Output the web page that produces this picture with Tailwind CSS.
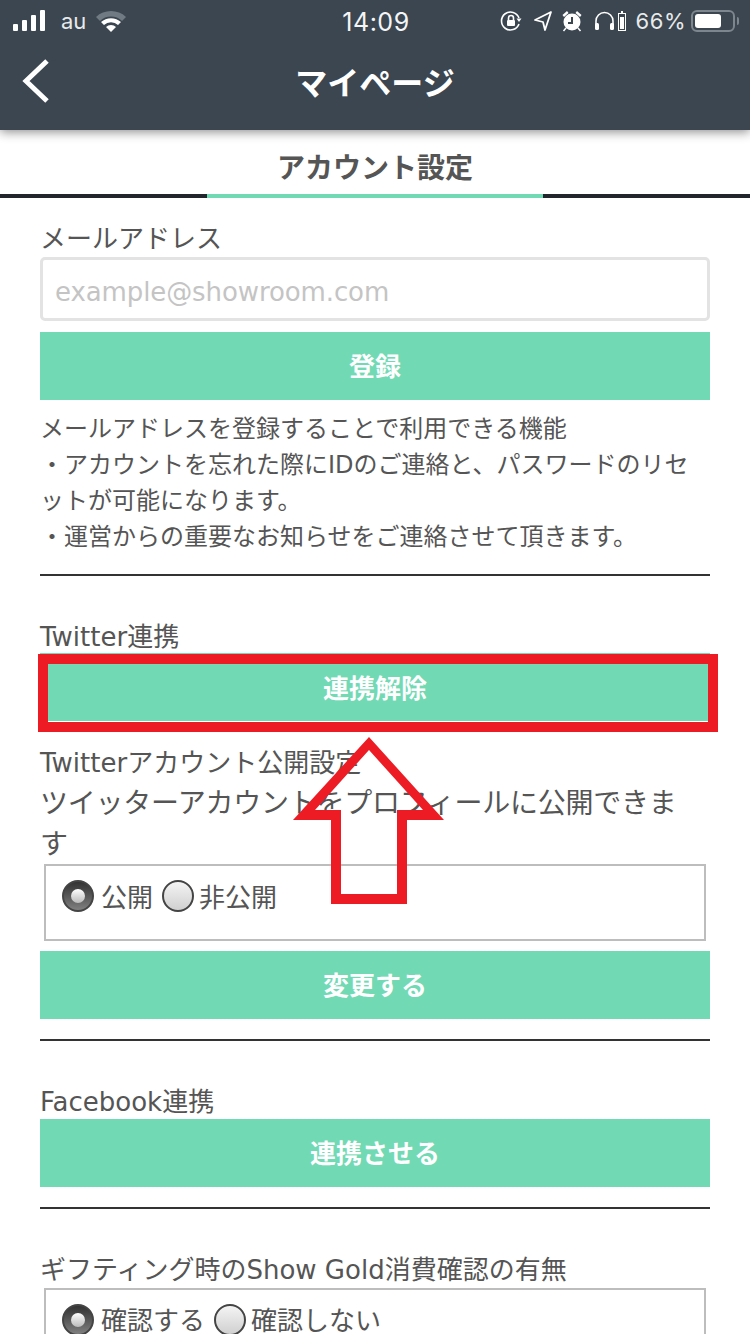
<!DOCTYPE html>
<html lang="ja">
<head>
<meta charset="utf-8">
<script src="https://cdn.jsdelivr.net/npm/@tailwindcss/browser@4"></script>
</head>
<body class="m-0 bg-white">
<div class="relative w-[750px] h-[1334px] overflow-hidden bg-white text-[#555555] font-['DejaVu_Sans','Noto_Sans_CJK_JP',sans-serif]">
  <header class="relative z-10 h-[130px] bg-[#3b4650] text-white shadow-[0_2px_10px_rgba(0,0,0,0.45)]">
    <div class="grid grid-cols-[1fr_auto_1fr] items-center h-[42px] pl-[13px] pr-[11px]">
      <div class="flex items-center">
        <svg width="34" height="22" viewBox="0 0 34 22" fill="#fff"><rect x="0" y="14" width="5" height="7" rx="1"/><rect x="9" y="10" width="5" height="11" rx="1"/><rect x="18" y="5" width="5" height="16" rx="1"/><rect x="27" y="0" width="5" height="21" rx="1"/></svg>
        <span class="ml-[14px] text-[22px] leading-[22px] font-['Inter',sans-serif] text-[#e8eaeb]">au</span>
        <svg class="ml-[9px]" width="32" height="24" viewBox="0 0 32 24"><path d="M1 8 A22 22 0 0 1 31 8 L27 12 A16 16 0 0 0 5 12 Z" fill="#6f7a83"/><path d="M6 13 A15 15 0 0 1 26 13 L23 16 A10 10 0 0 0 9 16 Z" fill="#fff"/><path d="M11 18 A7 7 0 0 1 21 18 L16 23 Z" fill="#fff"/></svg>
      </div>
      <span class="pt-[2px] text-[25px] leading-[24px] font-['Inter',sans-serif] tracking-[0.5px] text-[#f4f5f6]">14:09</span>
      <div class="flex items-center justify-end">
        <svg width="22" height="22" viewBox="0 0 22 22" fill="none" stroke="#fff" stroke-width="1.6"><path d="M19 14 A9 9 0 1 1 19 8"/><path d="M16.5 8.5 L21.5 8.5 L19 12 Z" fill="#fff" stroke="none"/><rect x="7" y="10" width="8" height="6" rx="1" fill="#fff" stroke="none"/><path d="M8.5 10 V8 a2.5 2.5 0 0 1 5 0 V10"/></svg>
        <svg class="ml-[11px]" width="20" height="22" viewBox="0 0 20 22" fill="none" stroke="#fff" stroke-width="1.8"><path d="M18 2 L2 10 L10 12 L12 20 Z" stroke-linejoin="round"/></svg>
        <svg class="ml-[9px]" width="20" height="22" viewBox="0 0 20 22" fill="#fff"><circle cx="10" cy="12" r="8.5"/><path d="M0.5 5 L5 1 L6.5 3 L2 7 Z M19.5 5 L15 1 L13.5 3 L18 7 Z"/><path d="M1.5 21 L4 18 M18.500 21 L16 18" stroke="#fff" stroke-width="1.5"/><path d="M10 7 V13 H6" stroke="#3b4650" stroke-width="2" fill="none"/></svg>
        <svg class="ml-[12px]" width="21" height="22" viewBox="0 0 21 22" fill="none" stroke="#fff" stroke-width="1.6"><path d="M2 17 V11 a8.500 8.500 0 0 1 17 0 V17"/><rect x="1" y="13" width="4" height="7" rx="1.500" fill="#fff" stroke="none"/><rect x="16" y="13" width="4" height="7" rx="1.500" fill="#fff" stroke="none"/></svg>
        <svg class="ml-[3px]" width="9" height="22" viewBox="0 0 9 22"><rect x="0.5" y="3.5" width="7" height="17" fill="none" stroke="#fff"/><rect x="2" y="7" width="4" height="12" fill="#fff"/><rect x="3" y="1" width="2" height="2" fill="#fff"/></svg>
        <span class="ml-[9px] text-[22px] leading-[22px] font-['Inter',sans-serif] tracking-[0.5px] text-[#e8eaeb]">66%</span>
        <div class="ml-[5px] flex items-center">
          <div class="w-[44px] h-[22px] rounded-[6px] border-2 border-[#7d868d] p-[2px]"><div class="w-[26px] h-full rounded-[3px] bg-white"></div></div>
          <div class="ml-[2px] w-[2px] h-[8px] rounded-r bg-[#7d868d]"></div>
        </div>
      </div>
    </div>
    <div class="relative h-[88px] flex items-center justify-center">
      <svg class="absolute left-[21px] top-[16px]" width="30" height="46" viewBox="0 0 30 46" fill="none" stroke="#fff" stroke-width="5"><path d="M26 3 L5 23 L26 43"/></svg>
      <h1 class="-mt-[5px] text-[32px] leading-[40px] font-bold">マイページ</h1>
    </div>
  </header>

  <div class="relative h-[68px]">
    <div class="h-[64px] pt-[20px] text-center text-[28px] leading-[38px] font-bold">アカウント設定</div>
    <div class="flex h-[4px]">
      <div class="w-[207px] bg-[#22252c]"></div>
      <div class="w-[336px] bg-[#71d9b4]"></div>
      <div class="flex-1 bg-[#22252c]"></div>
    </div>
  </div>

  <main class="px-[40px]">
    <section class="h-[378px] border-b-2 border-[#333]">
      <p class="pt-[23px] h-[59px] text-[26px] leading-[36px]">メールアドレス</p>
      <div class="h-[64px] flex items-center px-[12px] pt-[6px] border-[3px] border-[#e3e3e3] rounded-[5px] text-[26px] tracking-[-0.1px] text-[#c4c4c4]">example@showroom.com</div>
      <button class="mt-[11px] w-full h-[68px] pt-[2px] bg-[#71d9b4] text-white text-[26px] font-bold">登録</button>
      <div class="mt-[11px] text-[24px] leading-[36px]">
        <p>メールアドレスを登録することで利用できる機能</p>
        <p>・アカウントを忘れた際にIDのご連絡と、パスワードのリセ<br>ットが可能になります。</p>
        <p>・運営からの重要なお知らせをご連絡させて頂きます。</p>
      </div>
    </section>

    <section class="h-[465px] border-b-2 border-[#333]">
      <p class="pt-[43px] h-[78px] text-[26px] leading-[36px] -mb-[1px]">Twitter連携</p>
      <button class="w-full h-[68px] pt-[4px] bg-[#71d9b4] text-white text-[26px] font-bold">連携解除</button>
      <div class="mt-[22px] text-[28px] leading-[41px]">
        <p class="text-[26px] leading-[40px]">Twitterアカウント公開設定</p>
        <p class="tracking-[-0.25px]">ツイッターアカウントをプロフィールに公開できま<br>す</p>
      </div>
      <div class="mx-[4px] -mt-[1px] h-[77px] border-2 border-[#bdbdbd] pl-[16px] pt-[13px] flex items-start text-[26px] leading-[38px]">
        <span class="mt-[1px] w-[32px] h-[32px] rounded-full border-2 border-[#444] bg-linear-to-b from-[#333] to-[#808080] flex items-center justify-center"><span class="w-[14px] h-[14px] rounded-full bg-linear-to-b from-[#fff] to-[#bbb]"></span></span>
        <span class="ml-[7px]">公開</span>
        <span class="ml-[9px] mt-[1px] w-[32px] h-[32px] rounded-full border-2 border-[#444] bg-linear-to-b from-[#f4f4f4] to-[#d0d0d0]"></span>
        <span class="ml-[5px]">非公開</span>
      </div>
      <button class="mt-[10px] w-full h-[68px] pt-[2px] bg-[#71d9b4] text-white text-[26px] font-bold">変更する</button>
    </section>

    <section class="h-[168px] border-b-2 border-[#333]">
      <p class="pt-[43px] h-[78px] text-[26px] leading-[36px]">Facebook連携</p>
      <button class="w-full h-[68px] pt-[2px] bg-[#71d9b4] text-white text-[26px] font-bold">連携させる</button>
    </section>

    <section>
      <p class="pt-[43px] h-[79px] text-[26px] leading-[36px] whitespace-nowrap">ギフティング時のShow Gold消費確認の有無</p>
      <div class="mx-[4px] h-[77px] border-2 border-[#bdbdbd] pl-[16px] pt-[13px] flex items-start text-[26px] leading-[36px]">
        <span class="mt-[1px] w-[32px] h-[32px] rounded-full border-2 border-[#444] bg-linear-to-b from-[#333] to-[#808080] flex items-center justify-center"><span class="w-[14px] h-[14px] rounded-full bg-linear-to-b from-[#fff] to-[#bbb]"></span></span>
        <span class="ml-[7px]">確認する</span>
        <span class="ml-[9px] mt-[1px] w-[32px] h-[32px] rounded-full border-2 border-[#444] bg-linear-to-b from-[#f4f4f4] to-[#d0d0d0]"></span>
        <span class="ml-[5px]">確認しない</span>
      </div>
    </section>
  </main>

  <div class="absolute left-[38px] top-[654px] w-[680px] h-[78px] border-[10px] border-[#ed1c24]"></div>
  <svg class="absolute left-0 top-0 pointer-events-none" width="750" height="1334" viewBox="0 0 750 1334"><path fill="#ed1c24" fill-rule="evenodd" d="M369 737 L444 820 L407 820 L407 904 L331 904 L331 820 L293 820 Z M369 750 L315 810 L341 810 L341 894 L397 894 L397 810 L423 810 Z"/></svg>
</div>
</body>
</html>
